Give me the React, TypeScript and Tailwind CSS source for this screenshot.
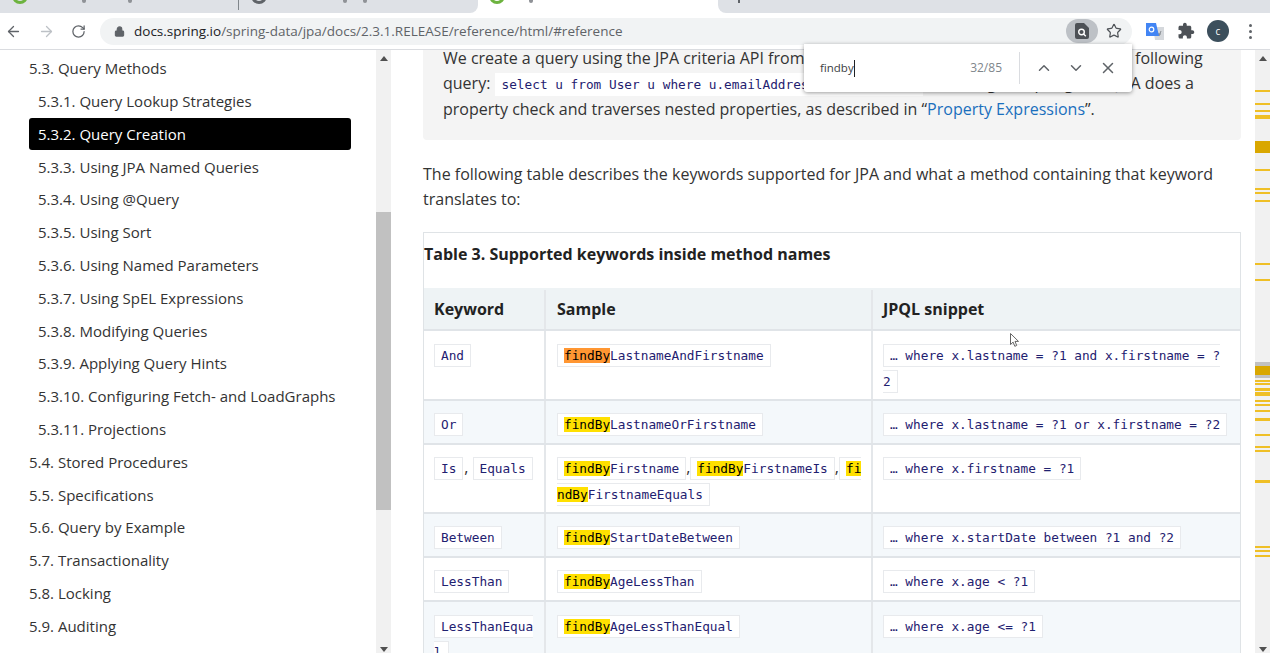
import React from "react";
import { ArrowLeft, ArrowRight, RotateCw, Lock, Star, ChevronUp, ChevronDown, X } from "lucide-react";

const mono = "text-[12.75px] text-[#1f2170] font-['DejaVu_Sans_Mono',monospace] whitespace-nowrap";

const tocItems = [
  { label: "5.3. Query Methods", level: 0 },
  { label: "5.3.1. Query Lookup Strategies", level: 1 },
  { label: "5.3.2. Query Creation", level: 1, active: true },
  { label: "5.3.3. Using JPA Named Queries", level: 1 },
  { label: "5.3.4. Using @Query", level: 1 },
  { label: "5.3.5. Using Sort", level: 1 },
  { label: "5.3.6. Using Named Parameters", level: 1 },
  { label: "5.3.7. Using SpEL Expressions", level: 1 },
  { label: "5.3.8. Modifying Queries", level: 1 },
  { label: "5.3.9. Applying Query Hints", level: 1 },
  { label: "5.3.10. Configuring Fetch- and LoadGraphs", level: 1 },
  { label: "5.3.11. Projections", level: 1 },
  { label: "5.4. Stored Procedures", level: 0 },
  { label: "5.5. Specifications", level: 0 },
  { label: "5.6. Query by Example", level: 0 },
  { label: "5.7. Transactionality", level: 0 },
  { label: "5.8. Locking", level: 0 },
  { label: "5.9. Auditing", level: 0 },
];

const marks = [
  [90, 2], [103, 2], [110, 2], [115, 4], [141, 12], [169, 2], [188, 2], [192, 2], [200, 2],
  [263, 2], [279, 2], [366, 9], [380, 2], [383, 2], [388, 3], [392, 4], [400, 2], [404, 2],
  [410, 2], [418, 3], [434, 2], [446, 2], [450, 2], [480, 3], [546, 2], [550, 2], [555, 2],
];

function Code({ children, cut }: { children: React.ReactNode; cut?: boolean }) {
  return (
    <code className={`bg-white border border-[#e8eaed] py-[3px] px-[6px] ${mono} ${cut ? "border-r-0 pr-0" : ""}`}>
      {children}
    </code>
  );
}

// second line of a code span the browser broke in two
function CodeRest({ children }: { children: React.ReactNode }) {
  return <code className={`bg-white border border-[#e8eaed] border-l-0 py-[3px] pr-[6px] ${mono}`}>{children}</code>;
}

function Hit({ children, current }: { children: React.ReactNode; current?: boolean }) {
  return <span className={`text-black ${current ? "bg-[#ff9632]" : "bg-[#ffe000]"}`}>{children}</span>;
}

function Row({ h, alt, low, a, b, c }: { h: string; alt?: boolean; low?: boolean; a: React.ReactNode; b: React.ReactNode; c: React.ReactNode }) {
  const pad = low ? "pt-[11px]" : "pt-[10px]";
  return (
    <div className={`flex ${h} border-b-2 border-[#e0e4e8] ${alt ? "bg-[#f4f8fb]" : "bg-white"} whitespace-nowrap`}>
      <div className={`w-[122px] shrink-0 pl-[10px] ${pad} leading-[25px] border-r-2 border-[#e4e7ea]`}>{a}</div>
      <div className={`w-[327px] shrink-0 pl-[11px] ${pad} leading-[25px] border-r-2 border-[#e4e7ea]`}>{b}</div>
      <div className={`flex-1 pl-[10px] ${pad} leading-[25px]`}>{c}</div>
    </div>
  );
}

function ScrollArrows() {
  return (
    <>
      <span className="mt-[6px] w-0 h-0 border-x-[4px] border-x-transparent border-b-[5px] border-b-[#505050]" />
      <span className="mb-[1px] w-0 h-0 border-x-[4px] border-x-transparent border-t-[5px] border-t-[#505050]" />
    </>
  );
}

function Favicon({ color }: { color: string }) {
  return <span className={`w-[16px] h-[16px] -mt-[12px] shrink-0 rounded-full border-[3px] ${color}`} />;
}

function Descender({ ml }: { ml: string }) {
  return <span className={`w-[4px] h-[3px] shrink-0 rounded-b-sm bg-[#8f9297] ${ml}`} />;
}

export default function App() {
  return (
    <div className="w-[1270px] h-[653px] overflow-hidden relative flex flex-col bg-white font-['Open_Sans',sans-serif]">
      {/* tab strip, cut off by the capture */}
      <div className="h-[13px] shrink-0 flex overflow-hidden bg-white">
        <div className="w-[478px] shrink-0 flex items-start pl-[12px] bg-[#dee1e6] rounded-br-[8px]">
          <Favicon color="border-[#6db33f]" />
          <Descender ml="ml-[54px]" />
          <Descender ml="ml-[42px]" />
          <span className="w-px h-[10px] bg-[#80868b] ml-[106px] shrink-0" />
          <Favicon color="ml-[12px] border-[#5f6368]" />
          <Descender ml="ml-[76px]" />
          <Descender ml="ml-[16px]" />
        </div>
        <div className="w-[240px] shrink-0 flex items-start pl-[11px]">
          <Favicon color="border-[#6db33f]" />
          <Descender ml="ml-[24px]" />
        </div>
        <div className="flex-1 flex items-start pl-[20px] bg-[#dee1e6] rounded-bl-[8px]">
          <span className="w-[2px] h-[3px] bg-[#5f6368]" />
        </div>
      </div>

      {/* toolbar */}
      <div className="h-[37px] shrink-0 bg-white border-b border-[#dadce0] flex items-center text-[#5f6368]">
        <div className="w-[100px] flex items-center pl-[5px] gap-[16px] shrink-0">
          <ArrowLeft size={17} strokeWidth={1.8} />
          <ArrowRight size={17} strokeWidth={1.8} className="text-[#bdc1c6]" />
          <RotateCw size={15} strokeWidth={2} />
        </div>
        <div className="w-[1032px] h-[27px] shrink-0 bg-[#f1f3f4] rounded-full flex items-center pl-[14px] pr-[10px]">
          <Lock size={11} fill="currentColor" strokeWidth={2.4} className="shrink-0" />
          <span className="ml-[9px] text-[13.5px] text-[#5f6368]">
            <span className="text-[#202124]">docs.spring.io</span>/spring-data/jpa/docs/2.3.1.RELEASE/reference/html/#reference
          </span>
          <div className="ml-auto flex items-center gap-[8px]">
            <span className="w-[32px] h-[24px] rounded-full bg-[#bdc1c6] flex items-center justify-center">
              <svg width="14" height="16" viewBox="0 0 14 16">
                <path d="M2 0h7l5 5v9a2 2 0 0 1-2 2H2a2 2 0 0 1-2-2V2a2 2 0 0 1 2-2z" fill="#4d5156" />
                <circle cx="6.5" cy="9" r="2.8" fill="none" stroke="#fff" strokeWidth="1.4" />
                <path d="M8.6 11.1l2.2 2.2" stroke="#fff" strokeWidth="1.4" />
              </svg>
            </span>
            <Star size={16} strokeWidth={1.8} className="text-[#4d5156]" />
          </div>
        </div>
        <div className="flex-1 flex items-center pl-[14px]">
          <svg width="18" height="17" viewBox="0 0 18 17" className="shrink-0">
            <path d="M7 4h11v13H9z" fill="#d5d8dc" />
            <path d="M11 8l2 5 2-5M12 11h3" stroke="#8a8f94" strokeWidth="1" fill="none" />
            <path d="M0 0h10l3 13H0z" fill="#4285f4" />
            <circle cx="5.5" cy="6.5" r="2.3" fill="none" stroke="#fff" strokeWidth="1.2" />
          </svg>
          <svg width="18" height="18" viewBox="0 0 24 24" className="ml-[13px] shrink-0">
            <path
              fill="#4d5156"
              d="M20.5 11H19V7c0-1.1-.9-2-2-2h-4V3.5C13 2.12 11.88 1 10.5 1S8 2.12 8 3.5V5H4c-1.1 0-1.99.9-1.99 2v3.8H3.5c1.49 0 2.7 1.21 2.7 2.7s-1.21 2.7-2.7 2.7H2V20c0 1.1.9 2 2 2h3.8v-1.5c0-1.49 1.21-2.7 2.7-2.7 1.49 0 2.7 1.21 2.7 2.7V22H17c1.1 0 2-.9 2-2v-4h1.5c1.38 0 2.5-1.12 2.5-2.5S21.88 11 20.5 11z"
            />
          </svg>
          <span className="ml-[12px] w-[22px] h-[22px] rounded-full bg-[#3c4f5c] text-white text-[10px] flex items-center justify-center shrink-0">c</span>
          <div className="ml-[20px] flex flex-col gap-[3px] shrink-0">
            <span className="w-[3px] h-[3px] rounded-full bg-[#5f6368]" />
            <span className="w-[3px] h-[3px] rounded-full bg-[#5f6368]" />
            <span className="w-[3px] h-[3px] rounded-full bg-[#5f6368]" />
          </div>
        </div>
      </div>

      {/* page */}
      <div className="flex-1 flex min-h-0">
        <nav className="w-[376px] shrink-0 bg-white pt-[2px] overflow-hidden text-[#333] text-[15px]">
          {tocItems.map((it) => (
            <div
              key={it.label}
              className={`h-[32.8px] ml-[29px] w-[322px] flex items-center whitespace-nowrap rounded-[3px] ${it.level ? "pl-[9px]" : ""} ${it.active ? "bg-black text-white" : ""}`}
            >
              {it.label}
            </div>
          ))}
        </nav>

        <div className="w-[15px] shrink-0 bg-[#f1f1f1] flex flex-col items-center justify-between relative">
          <ScrollArrows />
          <span className="absolute left-0 right-0 top-[162px] h-[298px] bg-[#c1c1c1]" />
        </div>

        <main className="w-[864px] shrink-0 overflow-hidden text-[#333] text-[16px] leading-[25px] pl-[32px] pr-[14px]">
          <div className="bg-[#f4f4f4] rounded-b-[4px] h-[94px] pl-[20px] pr-[20px] -mt-[4px] whitespace-nowrap">
            <p>We create a query using the JPA criteria API from this, but, essentially, this translates into the following</p>
            <p>
              query: <code className={`bg-white py-[4px] px-[7px] ${mono}`}>select u from User u where u.emailAddress.zipCode = ?1</code> . In doing so, Spring Data JPA does a
            </p>
            <p>
              property check and traverses nested properties, as described in “<span className="text-[#1a6fbd]">Property Expressions</span>”.
            </p>
          </div>

          <p className="mt-[22px]">The following table describes the keywords supported for JPA and what a method containing that keyword translates to:</p>

          <div className="mt-[20px] border border-b-0 border-[#dfe3e6] w-[818px]">
            <div className="h-[55px] pt-[9px] font-bold text-[#222] bg-white">Table 3. Supported keywords inside method names</div>
            <div className="flex h-[43px] pt-[2px] bg-[#eef3f5] border-b-2 border-[#e0e4e8] font-bold text-[#222]">
              <div className="w-[122px] pl-[10px] flex items-center border-r-2 border-[#e4e7ea]">Keyword</div>
              <div className="w-[327px] pl-[11px] flex items-center border-r-2 border-[#e4e7ea]">Sample</div>
              <div className="pl-[10px] flex items-center">JPQL snippet</div>
            </div>
            <Row
              h="h-[70px]"
              low
              a={<Code>And</Code>}
              b={<Code><Hit current>findBy</Hit>LastnameAndFirstname</Code>}
              c={<><Code cut>… where x.lastname = ?1 and x.firstname = ?</Code><br /><CodeRest>2</CodeRest></>}
            />
            <Row
              h="h-[44px]"
              alt
              a={<Code>Or</Code>}
              b={<Code><Hit>findBy</Hit>LastnameOrFirstname</Code>}
              c={<Code>… where x.lastname = ?1 or x.firstname = ?2</Code>}
            />
            <Row
              h="h-[69px]"
              a={<><Code>Is</Code><span className="ml-[1px] mr-[4px]">,</span><Code>Equals</Code></>}
              b={
                <>
                  <Code><Hit>findBy</Hit>Firstname</Code>,<Code><Hit>findBy</Hit>FirstnameIs</Code>,<Code cut><Hit>fi</Hit></Code>
                  <br />
                  <CodeRest><Hit>ndBy</Hit>FirstnameEquals</CodeRest>
                </>
              }
              c={<Code>… where x.firstname = ?1</Code>}
            />
            <Row
              h="h-[44px]"
              alt
              a={<Code>Between</Code>}
              b={<Code><Hit>findBy</Hit>StartDateBetween</Code>}
              c={<Code>… where x.startDate between ?1 and ?2</Code>}
            />
            <Row
              h="h-[44px]"
              a={<Code>LessThan</Code>}
              b={<Code><Hit>findBy</Hit>AgeLessThan</Code>}
              c={<Code>… where x.age &lt; ?1</Code>}
            />
            <Row
              h="h-[60px]"
              alt
              low
              a={<><Code cut>LessThanEqua</Code><br /><CodeRest>l</CodeRest></>}
              b={<Code><Hit>findBy</Hit>AgeLessThanEqual</Code>}
              c={<Code>… where x.age &lt;= ?1</Code>}
            />
          </div>
        </main>

        <div className="w-[15px] shrink-0 bg-[#f1f1f1] flex flex-col items-center justify-between">
          <ScrollArrows />
        </div>
      </div>

      {/* page scrollbar thumb, just its start shows above the ticks */}
      <span className="absolute right-0 top-[362px] w-[15px] h-[16px] bg-[#c1c1c1]" />

      {/* find-match ticks on the page scrollbar */}
      {marks.map(([y, h]) => (
        <span
          key={y}
          className={`absolute right-0 w-[15px] ${h > 5 ? "bg-[#d9a700]" : "bg-[#efbf26]"}`}
          style={{ top: y, height: h }}
        />
      ))}

      {/* mouse pointer */}
      <svg width="10" height="15" viewBox="0 0 10 15" className="absolute left-[1010px] top-[333px]">
        <path d="M.5.5v11l2.6-2.4 1.7 4.2 1.9-.8-1.7-4.1h3.5z" fill="#fff" stroke="#555" strokeWidth="0.9" />
      </svg>

      {/* find in page popup */}
      <div className="absolute left-[804px] top-[44px] w-[328px] h-[48px] bg-white rounded-b-[3px] shadow-[0_1px_4px_rgba(0,0,0,0.4)] flex items-center text-[12px] text-[#5f6368]">
        <span className="ml-[16px] text-[11.5px] text-[#3c4043]">findby</span>
        <span className="w-px h-[17px] bg-[#202124]" />
        <span className="ml-auto text-[#80868b]">32/85</span>
        <span className="w-px h-[32px] bg-[#dadce0] ml-[17px]" />
        <div className="flex items-center gap-[14px] ml-[15px] mr-[15px]">
          <ChevronUp size={18} strokeWidth={2} />
          <ChevronDown size={18} strokeWidth={2} />
          <X size={18} strokeWidth={2} />
        </div>
      </div>
    </div>
  );
}
